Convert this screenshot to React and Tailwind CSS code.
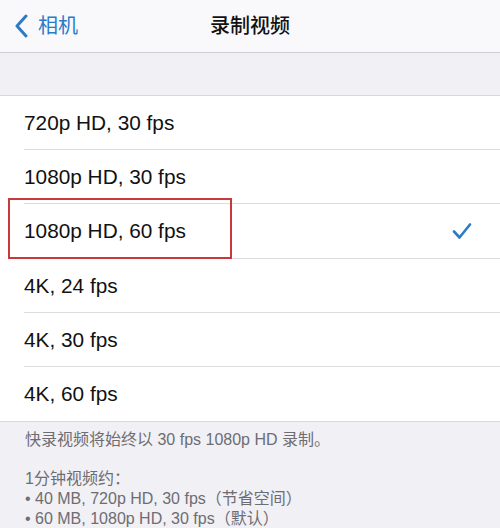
export default function App() {
  const options = [
    '720p HD, 30 fps',
    '1080p HD, 30 fps',
    '1080p HD, 60 fps',
    '4K, 24 fps',
    '4K, 30 fps',
    '4K, 60 fps',
  ];
  const selected = 2;
  const font = { fontFamily: '"Liberation Sans", "Noto Sans CJK SC", sans-serif' };

  return (
    <div className="w-[500px] h-[528px] overflow-hidden bg-[#f1f0f5]" style={font}>
      {/* Nav bar */}
      <div className="relative h-[53px] bg-[#f9f9fb] border-b border-[#cfcfd3] flex items-center">
        <div className="flex items-center pl-[14px] text-[#2c7bc7]">
          <svg width="15" height="24" viewBox="0 0 15 24" fill="none">
            <path d="M12 2 L3 12 L12 22" stroke="currentColor" strokeWidth="3" strokeLinecap="round" strokeLinejoin="round" />
          </svg>
          <span className="ml-[9px] text-[20px] leading-none">相机</span>
        </div>
        <div className="absolute inset-0 flex items-center justify-center text-[20px] font-medium text-[#111]">
          录制视频
        </div>
      </div>

      {/* Spacer */}
      <div className="h-[42px]" />

      {/* Options list */}
      <div className="bg-white border-t border-b border-[#d8d8dc]">
        {options.map((opt, i) => (
          <div key={opt} className="pl-[24px]">
            <div
              className={
                'relative h-[54.2px] flex items-center pr-[28px] ' +
                (i < options.length - 1 ? 'border-b border-[#dcdce0]' : '')
              }
            >
              {i === selected && (
                <div className="absolute left-[-16px] top-[-6px] w-[224px] h-[61px] border-2 border-[#c9383a]" />
              )}
              <span className="flex-1 text-[20.8px] text-[#111]">{opt}</span>
              {i === selected && (
                <svg width="20" height="18" viewBox="0 0 20 18" fill="none" className="text-[#2c7bc7]">
                  <path d="M2 9.5 L7.5 15.5 L18 2.5" stroke="currentColor" strokeWidth="2.6" strokeLinecap="round" strokeLinejoin="round" />
                </svg>
              )}
            </div>
          </div>
        ))}
      </div>

      {/* Footer */}
      <div className="pl-[25px] pt-[8px] text-[16px] leading-[20px] text-[#6d6d72]">
        <p>快录视频将始终以 30 fps 1080p HD 录制。</p>
        <p className="mt-[19px]">1分钟视频约：</p>
        <p>• 40 MB, 720p HD, 30 fps（节省空间）</p>
        <p>• 60 MB, 1080p HD, 30 fps（默认）</p>
      </div>
    </div>
  );
}
